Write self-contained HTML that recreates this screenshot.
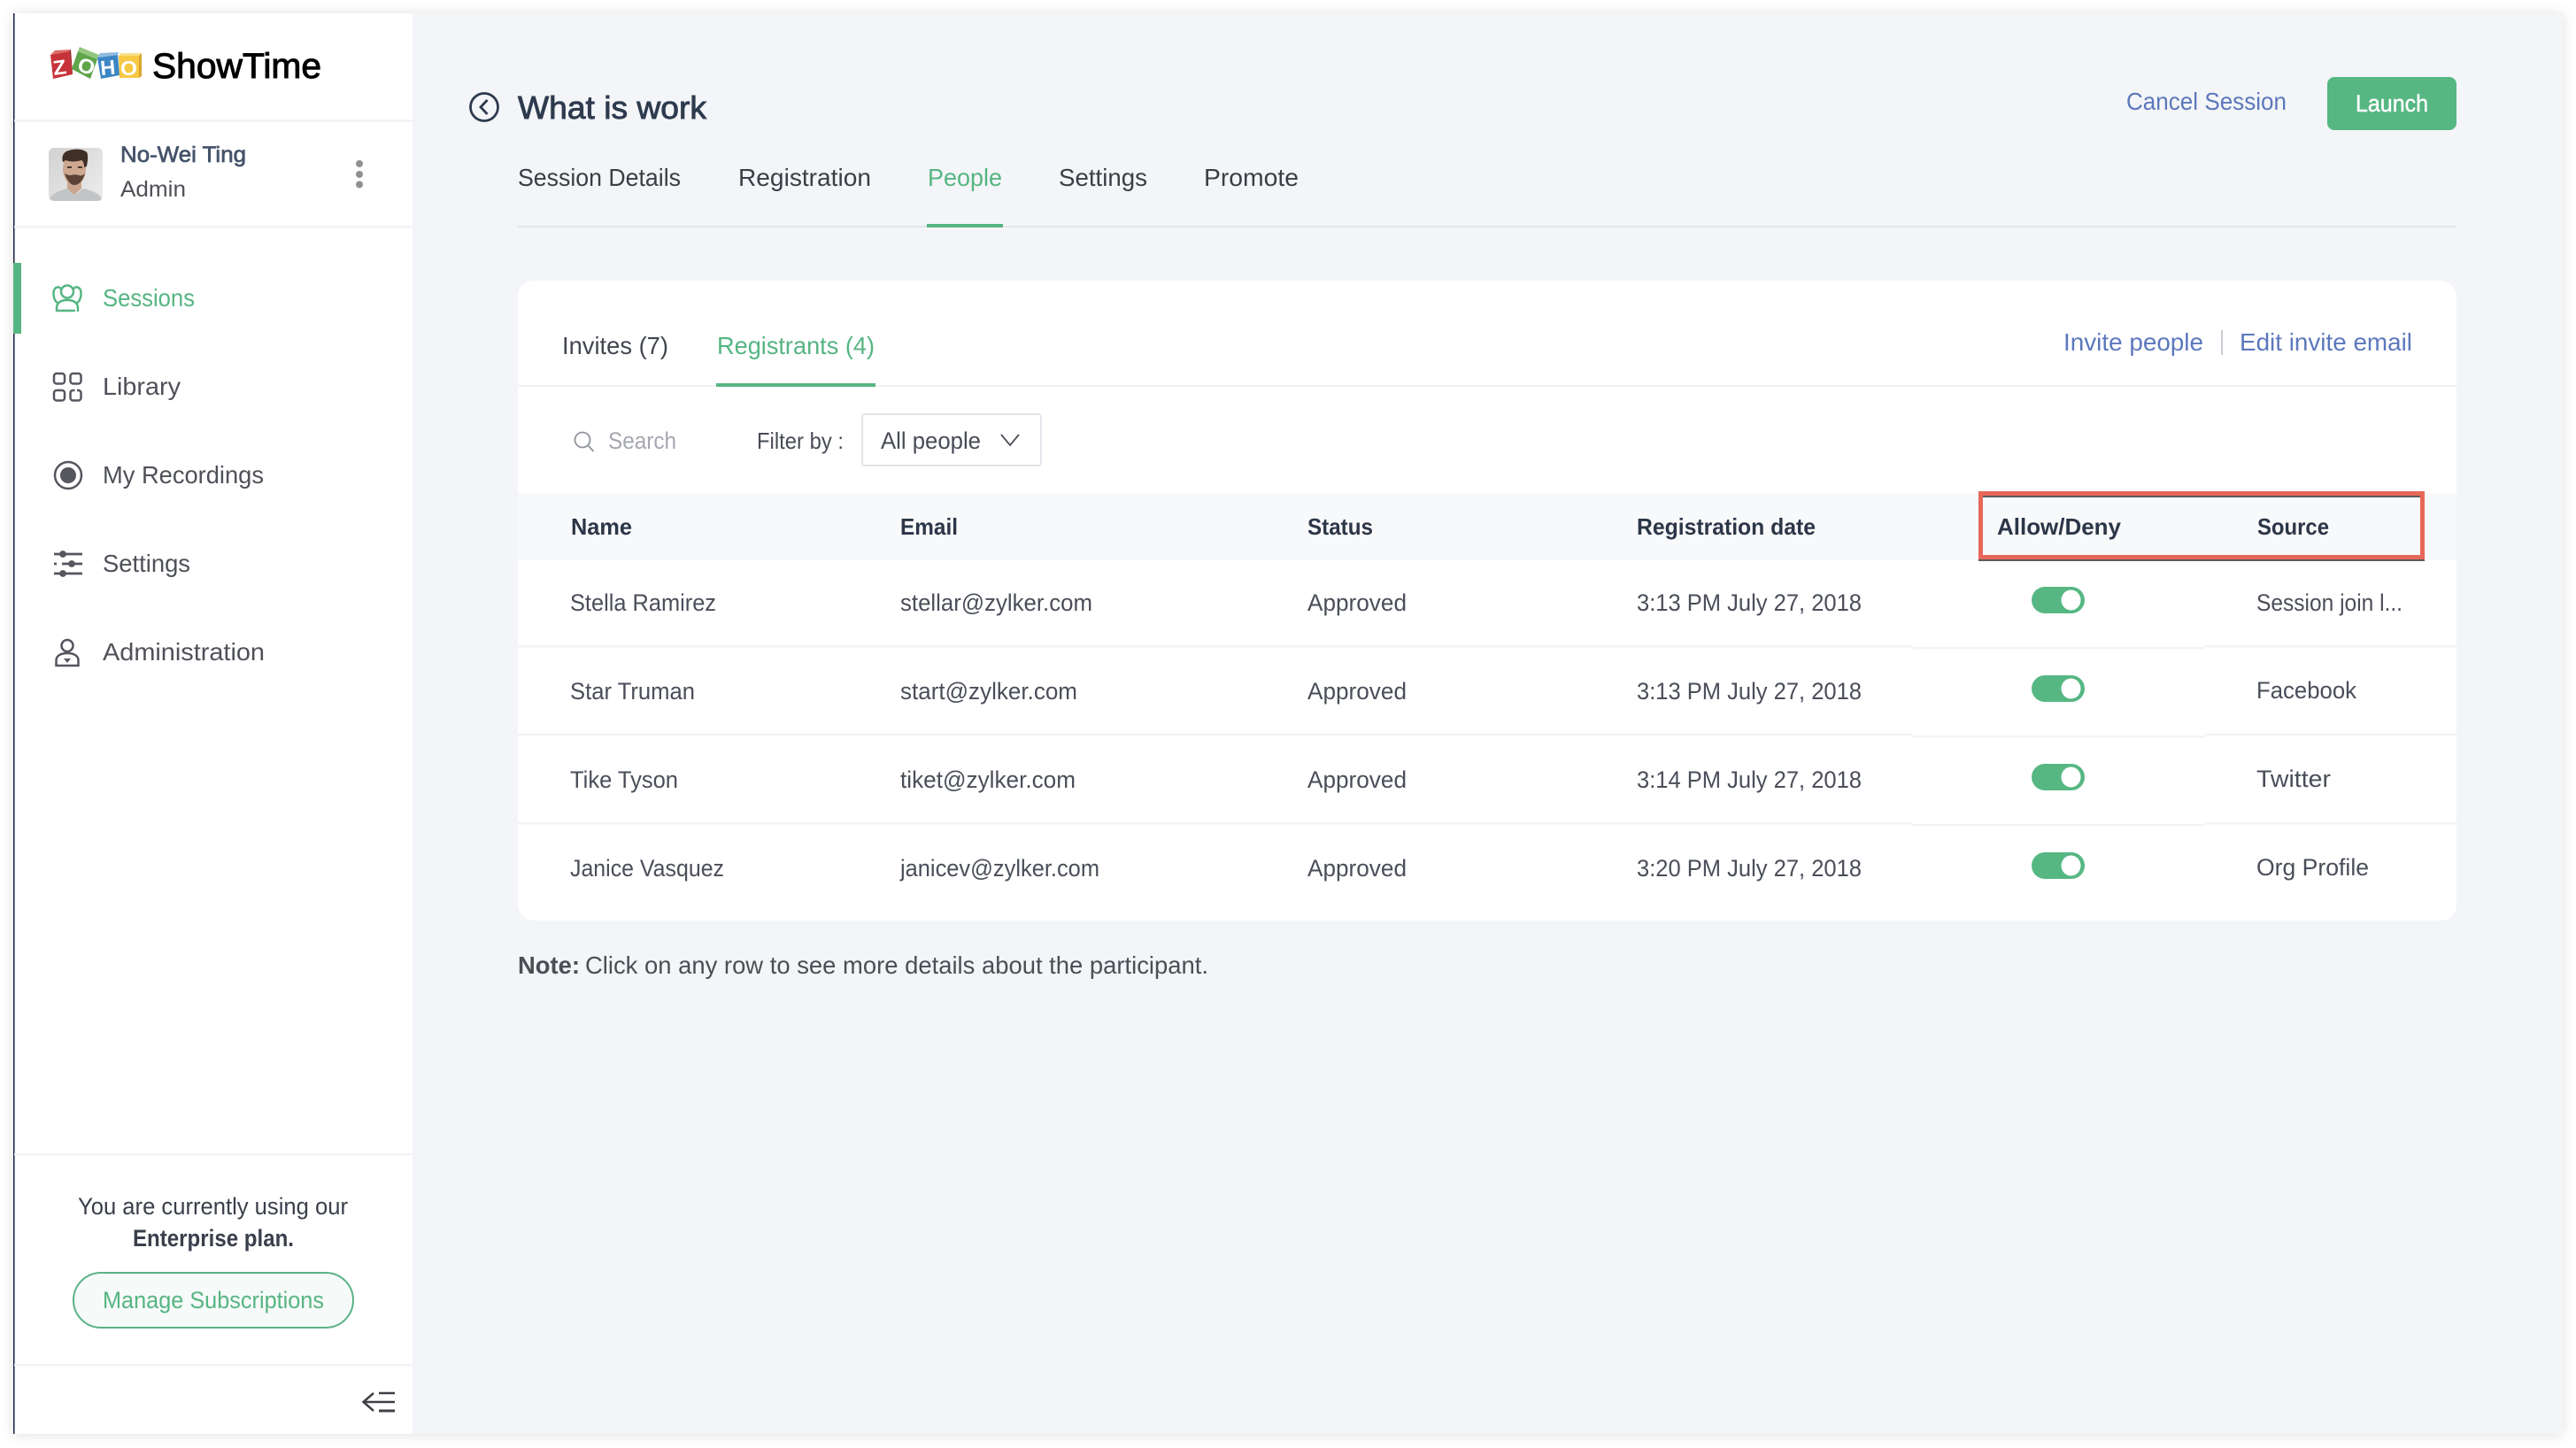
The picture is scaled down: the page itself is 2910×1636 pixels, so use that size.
<!DOCTYPE html>
<html lang="en">
<head>
<meta charset="utf-8">
<title>ShowTime - What is work</title>
<style>
html,body{margin:0;padding:0;width:2910px;height:1636px;background:#fff;overflow:hidden}
#win{position:absolute;left:15px;top:15px;width:2880px;height:1605px;background:#f4f5f8;box-shadow:0 1px 14px rgba(0,0,0,.13)}
svg{position:absolute;left:0;top:0}
text{font-family:"Liberation Sans",sans-serif;font-size:27px;fill:#474b55}
.g{fill:#56b582}
.b{fill:#5c78bc}
.h{font-weight:700;fill:#2c3648;font-size:26px}
.t{font-size:28px;fill:#3b3e45}
.n{font-size:28px;fill:#4f5159}
.c{font-size:27px;fill:#4a4e59}
.lg{font-weight:700;fill:#fff;font-size:23px}
</style>
</head>
<body>
<div id="win"></div>
<svg width="2910" height="1636" viewBox="0 0 2910 1636" xmlns="http://www.w3.org/2000/svg">
<defs>
<linearGradient id="av" x1="0" y1="0" x2="1" y2="1"><stop offset="0" stop-color="#d2d2d2"/><stop offset="1" stop-color="#ededed"/></linearGradient>
<clipPath id="avc"><rect x="55" y="167" width="61" height="60" rx="6"/></clipPath>
</defs>

<!-- sidebar -->
<rect x="16" y="15" width="450" height="1605" fill="#fff"/>
<rect x="15" y="15" width="1.500" height="1605" fill="#14203f"/>
<rect x="16" y="135" width="450" height="2.500" fill="#f2f3f5"/>
<rect x="16" y="255" width="450" height="2.500" fill="#f2f3f5"/>
<rect x="16" y="1303" width="450" height="2.500" fill="#f2f3f5"/>
<rect x="16" y="1541" width="450" height="2.500" fill="#f2f3f5"/>
<rect x="15" y="297" width="9" height="80" fill="#56b582"/>

<!-- logo -->
<polygon points="57,62 78,58 82,84 60,89" fill="#c7333a"/>
<polygon points="57,62 62,57 80,56 78,58" fill="#dd6a63"/>
<polygon points="78,58 80,56 82,82 82,84" fill="#9d2a2d"/>
<text class="lg" x="0" y="0" transform="translate(61,85) rotate(-8)" textLength="15" lengthAdjust="spacingAndGlyphs">Z</text>
<polygon points="81,78 88,58 110,67 102,89" fill="#5fa64b"/>
<polygon points="88,58 90,53 112,62 110,67" fill="#93c77f"/>
<text class="lg" x="0" y="0" transform="translate(86,79) rotate(20)" textLength="19" lengthAdjust="spacingAndGlyphs">O</text>
<polygon points="110,65 133,62 135,85 114,89" fill="#3c86c6"/>
<polygon points="110,65 113,60 134,59 133,62" fill="#8dbce0"/>
<text class="lg" x="0" y="0" transform="translate(114,85) rotate(-5)" textLength="17" lengthAdjust="spacingAndGlyphs">H</text>
<polygon points="134,63 157,63 157,88 135,88" fill="#f6c945"/>
<polygon points="134,63 136,60 160,60 157,63" fill="#fae08a"/>
<polygon points="157,63 160,60 160,86 157,88" fill="#d9a52e"/>
<text class="lg" x="136" y="85" textLength="19" lengthAdjust="spacingAndGlyphs">O</text>
<text x="172" y="88" style="font-size:40px;fill:#000;stroke:#000;stroke-width:1" textLength="191" lengthAdjust="spacingAndGlyphs">ShowTime</text>

<!-- profile -->
<g clip-path="url(#avc)">
<rect x="55" y="167" width="61" height="60" fill="url(#av)"/>
<path d="M55 227 c2-9 14-12 21-14 l9 7 l9-7 c8 2 20 5 22 14 z" fill="#c2c4c6"/>
<path d="M76 203 h16 v10 l-8 7 l-8-7 z" fill="#c9a48e"/>
<ellipse cx="84" cy="191" rx="13" ry="18" fill="#cfa890"/>
<path d="M73 196 c2 6 6 13 11 13 c6 0 10-6 12-13 c-2 2-5 3-7 2 c-3-1-6-1-9 0 c-3 0-5-1-7-2 z" fill="#5a4335"/>
<path d="M71 183 c-2-8 2-12 7-13 c6-2 15-2 20 2 c2 3 1 10 0 16 l-3 1 c0-4-1-7-3-8 c-6 2-13 2-18 0 c-1 1-2 2-3 2 z" fill="#3f3027"/>
<path d="M76 189 h5 M88 189 h5" stroke="#4a3a30" stroke-width="2"/>
</g>
<text x="136" y="183" style="font-size:25px;fill:#45536a;stroke:#45536a;stroke-width:.7" textLength="142" lengthAdjust="spacingAndGlyphs">No-Wei Ting</text>
<text x="136" y="222" style="font-size:25px;fill:#4f5157" textLength="74" lengthAdjust="spacingAndGlyphs">Admin</text>
<circle cx="406" cy="185" r="4" fill="#909090"/>
<circle cx="406" cy="197" r="4" fill="#909090"/>
<circle cx="406" cy="208.500" r="4" fill="#909090"/>

<!-- nav -->
<g fill="none" stroke="#56b582" stroke-width="2.500" stroke-linecap="round" stroke-linejoin="round">
<circle cx="76" cy="329.500" r="7"/>
<path d="M64 351 h20 M64 351 v-3 c0-6 5-9 12-9 s12 3 12 9 v3"/>
<path d="M69 326 C64 322 60 326 60.500 333 C61 338 63 341 65 342"/>
<path d="M83 326 C88 322 92 326 91.500 333 C91 338 89 341 87 342"/>
</g>
<text class="g" x="116" y="346" style="font-size:28px" textLength="104" lengthAdjust="spacingAndGlyphs">Sessions</text>

<g fill="none" stroke="#55565e" stroke-width="2.500">
<rect x="61" y="422" width="12" height="11.500" rx="3"/>
<rect x="79.500" y="422" width="12" height="11.500" rx="3"/>
<rect x="61" y="441" width="12" height="11.500" rx="3"/>
<rect x="79.500" y="441" width="12" height="11.500" rx="3"/>
</g>
<rect x="84.500" y="439" width="2.500" height="4" fill="#fff"/>
<text class="n" x="116" y="446" textLength="88" lengthAdjust="spacingAndGlyphs">Library</text>

<circle cx="77" cy="537" r="15" fill="none" stroke="#55565e" stroke-width="2.500"/>
<circle cx="77" cy="537" r="9" fill="#55565e"/>
<text class="n" x="116" y="546" textLength="182" lengthAdjust="spacingAndGlyphs">My Recordings</text>

<g stroke="#55565e" stroke-width="2.800" fill="#55565e">
<path d="M61 626 h32 M61 648 h32 M70 637 h23 M61 637 h3"/>
<circle cx="71" cy="626" r="2.500"/>
<circle cx="81" cy="637" r="2.500"/>
<circle cx="71" cy="648" r="2.500"/>
</g>
<text class="n" x="116" y="646" textLength="99" lengthAdjust="spacingAndGlyphs">Settings</text>

<g fill="none" stroke="#55565e" stroke-width="2.500">
<circle cx="76" cy="729.500" r="6.500"/>
<path d="M63.500 752 v-6 c0-5 5-8 12.500-8 s12.500 3 12.500 8 v6 z"/>
</g>
<path d="M72 744 h8 l-4 5 z" fill="#55565e"/>
<text class="n" x="116" y="746" textLength="183" lengthAdjust="spacingAndGlyphs">Administration</text>

<!-- plan -->
<text x="88" y="1372" style="font-size:27px;fill:#3a3f4b" textLength="305" lengthAdjust="spacingAndGlyphs">You are currently using our</text>
<text x="150" y="1408" style="font-size:27px;font-weight:700;fill:#3a3f4b" textLength="182" lengthAdjust="spacingAndGlyphs">Enterprise plan.</text>
<rect x="83" y="1438" width="316" height="62" rx="31" fill="#f6faf8" stroke="#5cb288" stroke-width="2"/>
<text class="g" x="116" y="1478" style="font-size:27px" textLength="250" lengthAdjust="spacingAndGlyphs">Manage Subscriptions</text>
<g fill="none" stroke="#3f4046" stroke-width="2.500">
<path d="M422 1574 L410.500 1584 L422 1594"/>
<path d="M428 1574 h18 M411 1584 h35"/>
<path d="M428 1594 h18" stroke-width="3"/>
</g>

<!-- header -->
<circle cx="547" cy="121" r="15.500" fill="none" stroke="#2d3a4d" stroke-width="2.800"/>
<path d="M550.500 113 l-7.500 8 l7.500 8" fill="none" stroke="#2d3a4d" stroke-width="2.800"/>
<text x="585" y="134" style="font-size:36px;fill:#2e3b4e;stroke:#2e3b4e;stroke-width:.9" textLength="213" lengthAdjust="spacingAndGlyphs">What is work</text>
<text class="t" x="585" y="210" textLength="184" lengthAdjust="spacingAndGlyphs">Session Details</text>
<text class="t" x="834" y="210" textLength="150" lengthAdjust="spacingAndGlyphs">Registration</text>
<text class="t" x="1048" y="210" style="fill:#56b582" textLength="84" lengthAdjust="spacingAndGlyphs">People</text>
<text class="t" x="1196" y="210" textLength="100" lengthAdjust="spacingAndGlyphs">Settings</text>
<text class="t" x="1360" y="210" textLength="107" lengthAdjust="spacingAndGlyphs">Promote</text>
<rect x="585" y="255" width="2190" height="2" fill="#e3e5ea"/>
<rect x="1047" y="253" width="86" height="4" fill="#56b582"/>
<text class="b" x="2402" y="124" style="font-size:28px" textLength="181" lengthAdjust="spacingAndGlyphs">Cancel Session</text>
<rect x="2629" y="87" width="146" height="60" rx="8" fill="#56b783"/>
<text x="2661" y="126" style="font-size:27px;fill:#fff;stroke:#fff;stroke-width:.4" textLength="82" lengthAdjust="spacingAndGlyphs">Launch</text>

<!-- card -->
<rect x="585" y="317" width="2190" height="723" rx="18" fill="#fff"/>
<text x="635" y="400" style="font-size:28px;fill:#41464f" textLength="120" lengthAdjust="spacingAndGlyphs">Invites (7)</text>
<text class="g" x="810" y="400" style="font-size:28px" textLength="178" lengthAdjust="spacingAndGlyphs">Registrants (4)</text>
<rect x="585" y="435" width="2190" height="2" fill="#f0f1f3"/>
<rect x="809" y="433" width="180" height="4" fill="#56b582"/>
<text class="b" x="2331" y="396" style="font-size:28px" textLength="158" lengthAdjust="spacingAndGlyphs">Invite people</text>
<rect x="2509" y="373" width="2" height="28" fill="#c9ccd2"/>
<text class="b" x="2530" y="396" style="font-size:28px" textLength="195" lengthAdjust="spacingAndGlyphs">Edit invite email</text>

<!-- filter -->
<circle cx="658" cy="497" r="8.500" fill="none" stroke="#8f939b" stroke-width="1.800"/>
<path d="M664 503 L670.500 510" stroke="#8f939b" stroke-width="1.800"/>
<text x="687" y="507" style="fill:#a5a8b0" textLength="77" lengthAdjust="spacingAndGlyphs">Search</text>
<text x="855" y="507" style="font-size:26px" textLength="98" lengthAdjust="spacingAndGlyphs">Filter by :</text>
<rect x="974" y="468" width="202" height="58" rx="3" fill="#fff" stroke="#e2e5ea" stroke-width="2"/>
<text x="995" y="507" textLength="113" lengthAdjust="spacingAndGlyphs">All people</text>
<path d="M1131 491 L1141 503 L1151 491" fill="none" stroke="#4a4e59" stroke-width="1.800"/>

<!-- table header -->
<rect x="585" y="557" width="2190" height="76" fill="#f8f9fb"/>
<text class="h" x="645" y="604" textLength="69" lengthAdjust="spacingAndGlyphs">Name</text>
<text class="h" x="1017" y="604" textLength="65" lengthAdjust="spacingAndGlyphs">Email</text>
<text class="h" x="1477" y="604" textLength="74" lengthAdjust="spacingAndGlyphs">Status</text>
<text class="h" x="1849" y="604" textLength="202" lengthAdjust="spacingAndGlyphs">Registration date</text>
<text class="h" x="2256" y="604" textLength="140" lengthAdjust="spacingAndGlyphs">Allow/Deny</text>
<text class="h" x="2550" y="604" textLength="81" lengthAdjust="spacingAndGlyphs">Source</text>
<rect x="2237.500" y="559.500" width="499" height="72" fill="none" stroke="#5b5b5e" stroke-width="5"/>
<rect x="2237.500" y="557.500" width="499" height="72" fill="none" stroke="#e7685a" stroke-width="5"/>

<!-- row lines -->
<g fill="#f3f4f6">
<rect x="585" y="729" width="1575" height="2.500"/><rect x="2160" y="731" width="331" height="2.500"/><rect x="2491" y="729" width="284" height="2.500"/>
<rect x="585" y="829" width="1575" height="2.500"/><rect x="2160" y="831" width="331" height="2.500"/><rect x="2491" y="829" width="284" height="2.500"/>
<rect x="585" y="929" width="1575" height="2.500"/><rect x="2160" y="931" width="331" height="2.500"/><rect x="2491" y="929" width="284" height="2.500"/>
</g>

<!-- rows -->
<text class="c" x="644" y="690" textLength="165" lengthAdjust="spacingAndGlyphs">Stella Ramirez</text>
<text class="c" x="1017" y="690" textLength="217" lengthAdjust="spacingAndGlyphs">stellar@zylker.com</text>
<text class="c" x="1477" y="690" textLength="112" lengthAdjust="spacingAndGlyphs">Approved</text>
<text class="c" x="1849" y="690" textLength="254" lengthAdjust="spacingAndGlyphs">3:13 PM July 27, 2018</text>
<text class="c" x="2549" y="690" textLength="165" lengthAdjust="spacingAndGlyphs">Session join l...</text>

<text class="c" x="644" y="790" textLength="141" lengthAdjust="spacingAndGlyphs">Star Truman</text>
<text class="c" x="1017" y="790" textLength="200" lengthAdjust="spacingAndGlyphs">start@zylker.com</text>
<text class="c" x="1477" y="790" textLength="112" lengthAdjust="spacingAndGlyphs">Approved</text>
<text class="c" x="1849" y="790" textLength="254" lengthAdjust="spacingAndGlyphs">3:13 PM July 27, 2018</text>
<text class="c" x="2549" y="789" textLength="113" lengthAdjust="spacingAndGlyphs">Facebook</text>

<text class="c" x="644" y="890" textLength="122" lengthAdjust="spacingAndGlyphs">Tike Tyson</text>
<text class="c" x="1017" y="890" textLength="198" lengthAdjust="spacingAndGlyphs">tiket@zylker.com</text>
<text class="c" x="1477" y="890" textLength="112" lengthAdjust="spacingAndGlyphs">Approved</text>
<text class="c" x="1849" y="890" textLength="254" lengthAdjust="spacingAndGlyphs">3:14 PM July 27, 2018</text>
<text class="c" x="2549" y="889" textLength="84" lengthAdjust="spacingAndGlyphs">Twitter</text>

<text class="c" x="644" y="990" textLength="174" lengthAdjust="spacingAndGlyphs">Janice Vasquez</text>
<text class="c" x="1017" y="990" textLength="225" lengthAdjust="spacingAndGlyphs">janicev@zylker.com</text>
<text class="c" x="1477" y="990" textLength="112" lengthAdjust="spacingAndGlyphs">Approved</text>
<text class="c" x="1849" y="990" textLength="254" lengthAdjust="spacingAndGlyphs">3:20 PM July 27, 2018</text>
<text class="c" x="2549" y="989" textLength="127" lengthAdjust="spacingAndGlyphs">Org Profile</text>

<!-- toggles -->
<g fill="#56b783">
<rect x="2295" y="663" width="60" height="30" rx="15"/>
<rect x="2295" y="763" width="60" height="30" rx="15"/>
<rect x="2295" y="863" width="60" height="30" rx="15"/>
<rect x="2295" y="963" width="60" height="30" rx="15"/>
</g>
<g fill="#fff">
<ellipse cx="2339.500" cy="678" rx="11" ry="11.500"/>
<ellipse cx="2339.500" cy="778" rx="11" ry="11.500"/>
<ellipse cx="2339.500" cy="878" rx="11" ry="11.500"/>
<ellipse cx="2339.500" cy="978" rx="11" ry="11.500"/>
</g>

<!-- note -->
<text x="585" y="1100" style="font-size:28px;font-weight:700;fill:#4c4e55" textLength="70" lengthAdjust="spacingAndGlyphs">Note:</text>
<text x="661" y="1100" style="font-size:28px;fill:#4c4e55" textLength="704" lengthAdjust="spacingAndGlyphs">Click on any row to see more details about the participant.</text>
</svg>
</body>
</html>
